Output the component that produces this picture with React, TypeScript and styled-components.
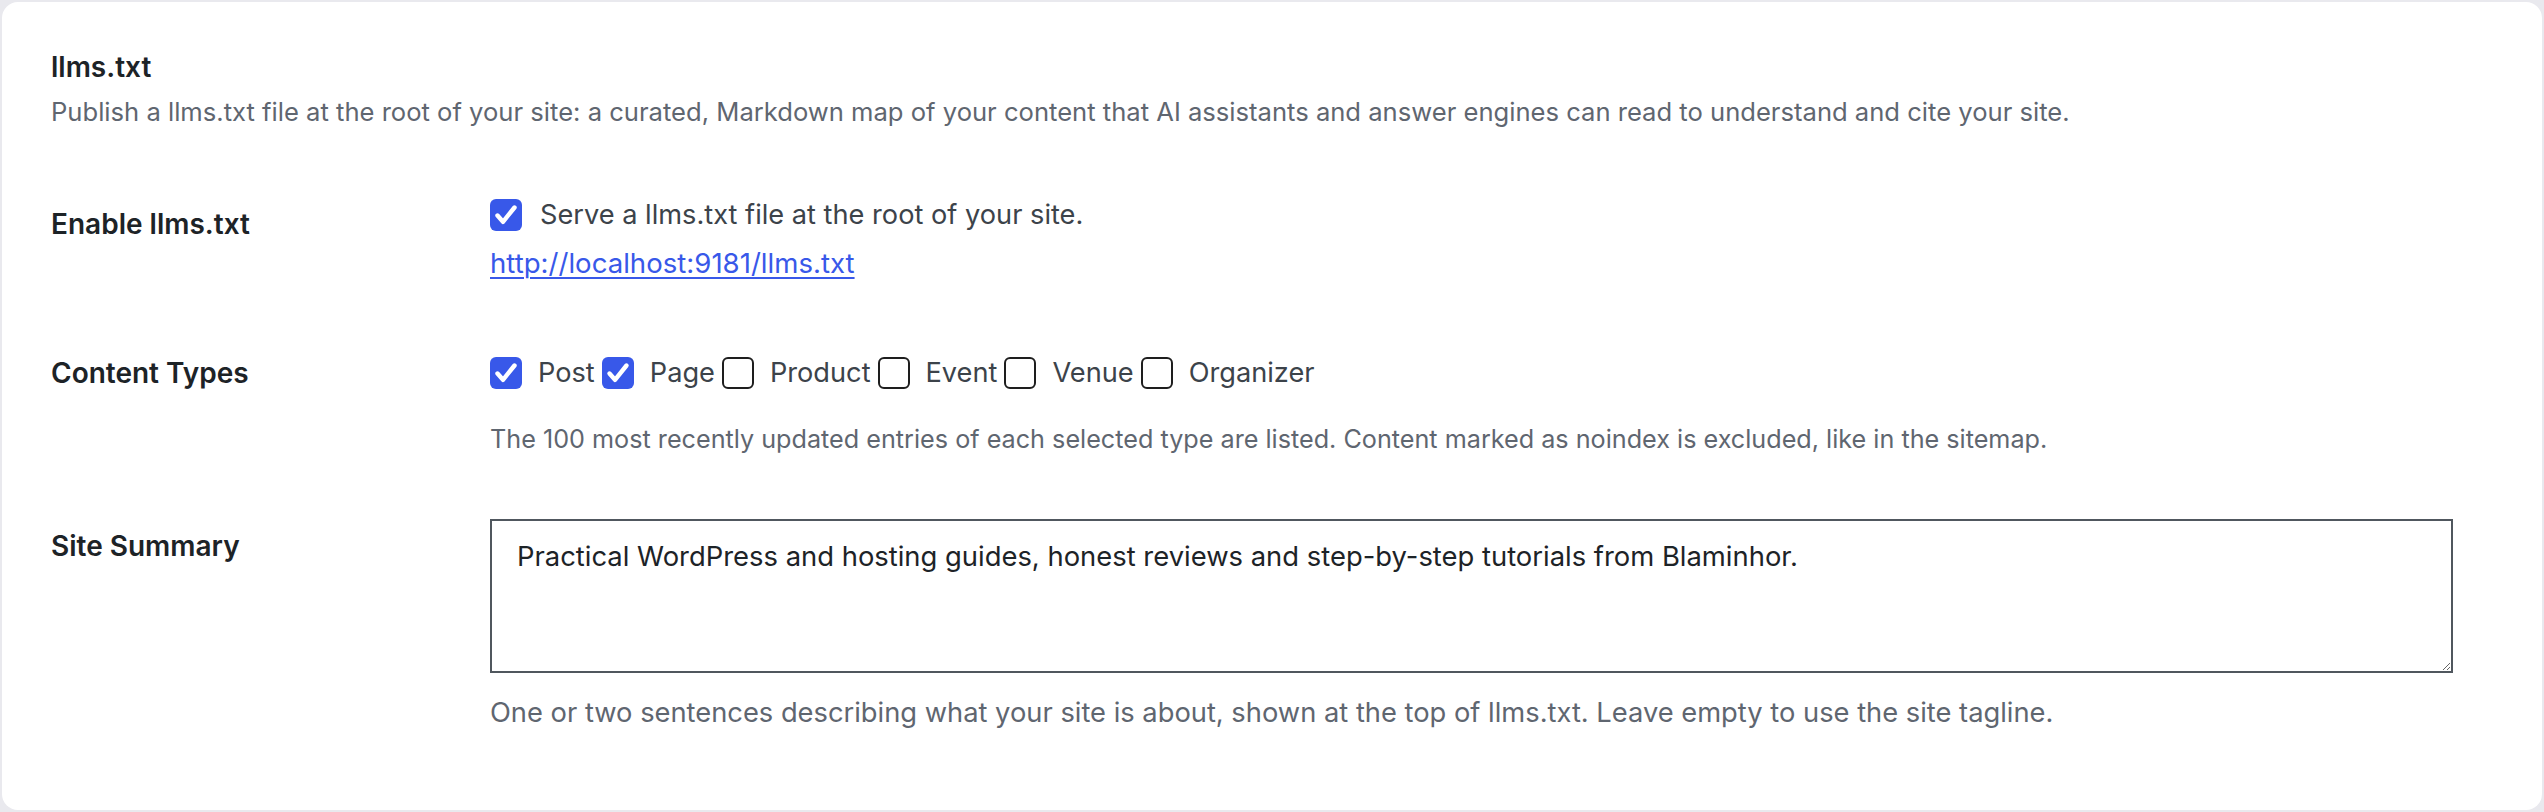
import styled, { createGlobalStyle } from 'styled-components'

const Global = createGlobalStyle`
  html, body {
    margin: 0;
    padding: 0;
    background: #e9e9ee;
    font-family: Inter, "Noto Sans", "Liberation Sans", sans-serif;
  }
  * { box-sizing: border-box; }
`

type Option = { label: string; checked: boolean }

const types: Option[] = [
  { label: 'Post', checked: true },
  { label: 'Page', checked: true },
  { label: 'Product', checked: false },
  { label: 'Event', checked: false },
  { label: 'Venue', checked: false },
  { label: 'Organizer', checked: false },
]

const Check = ({ checked }: { checked: boolean }) => (
  <Box $checked={checked}>
    {checked && (
      <svg width="32" height="32" viewBox="0 0 32 32">
        <path d="M7.5 16.5 L13 22.8 L24.5 8.5" fill="none" stroke="#fff" strokeWidth="4.4" strokeLinecap="round" strokeLinejoin="round" />
      </svg>
    )}
  </Box>
)

const App = () => {
  return (
    <Card>
      <Global />
      <Title>llms.txt</Title>
      <Intro>
        Publish a llms.txt file at the root of your site: a curated, Markdown map of your content that AI assistants and answer engines can read to understand and cite your site.
      </Intro>

      <Row $top={65}>
        <Label $offset={9}>Enable llms.txt</Label>
        <Field>
          <OptionLine>
            <Choice $gap={18}>
              <Check checked />
              <span>Serve a llms.txt file at the root of your site.</span>
            </Choice>
          </OptionLine>
          <Link href="#">http://localhost:9181/llms.txt</Link>
        </Field>
      </Row>

      <Row $top={70}>
        <Label $offset={0}>Content Types</Label>
        <Field>
          <OptionLine>
            {types.map((t) => (
              <Choice key={t.label} $gap={16}>
                <Check checked={t.checked} />
                <span>{t.label}</span>
              </Choice>
            ))}
          </OptionLine>
          <Help $top={28} $size={25.2}>
            The 100 most recently updated entries of each selected type are listed. Content marked as noindex is excluded, like in the sitemap.
          </Help>
        </Field>
      </Row>

      <Row $top={62}>
        <Label $offset={7}>Site Summary</Label>
        <Field>
          <Summary defaultValue="Practical WordPress and hosting guides, honest reviews and step-by-step tutorials from Blaminhor." />
          <Help $top={22} $size={27.3}>
            One or two sentences describing what your site is about, shown at the top of llms.txt. Leave empty to use the site tagline.
          </Help>
        </Field>
      </Row>
    </Card>
  )
}

export default App

const Card = styled.div`
  margin: 2px;
  height: 808px;
  background: #fff;
  border-radius: 16px;
  padding: 45px 49px 0 49px;
`

const Title = styled.h2`
  margin: 0;
  font-size: 28px;
  line-height: 40px;
  font-weight: 600;
  color: #1d2327;
`

const Intro = styled.p`
  margin: 7px 0 0;
  font-size: 25.6px;
  line-height: 36px;
  color: #5f6670;
`

const Row = styled.div<{ $top: number }>`
  display: grid;
  grid-template-columns: 439px 1fr;
  align-items: start;
  margin-top: ${(p) => p.$top}px;
`

const Label = styled.div<{ $offset: number }>`
  padding-top: ${(p) => p.$offset}px;
  font-size: 28px;
  line-height: 40px;
  font-weight: 600;
  color: #1d2327;
`

const Field = styled.div`
  display: flex;
  flex-direction: column;
  align-items: flex-start;
`

const OptionLine = styled.div`
  display: flex;
  align-items: center;
  height: 40px;
`

const Choice = styled.label<{ $gap: number }>`
  display: flex;
  align-items: center;
  gap: ${(p) => p.$gap}px;
  padding-right: 7px;
  font-size: 27.2px;
  line-height: 40px;
  color: #3c434a;
  cursor: pointer;
`

const Box = styled.span<{ $checked: boolean }>`
  display: inline-flex;
  width: 32px;
  height: 32px;
  flex: none;
  border-radius: 6px;
  background: ${(p) => (p.$checked ? '#3858e9' : '#fff')};
  border: ${(p) => (p.$checked ? 'none' : '2.5px solid #1e1e1e')};
`

const Link = styled.a`
  margin-top: 8px;
  font-size: 27.6px;
  line-height: 40px;
  color: #3858e9;
  text-decoration: underline;
  text-underline-offset: 4px;
  text-decoration-thickness: 2px;
`

const Help = styled.p<{ $top: number; $size: number }>`
  margin: ${(p) => p.$top}px 0 0;
  font-size: ${(p) => p.$size}px;
  line-height: 36px;
  color: #5f6670;
`

const Summary = styled.textarea`
  width: 1963px;
  height: 154px;
  border: 2px solid #50575e;
  border-radius: 0;
  padding: 15px 25px;
  font-family: Inter, "Noto Sans", "Liberation Sans", sans-serif;
  font-size: 27.4px;
  line-height: 40px;
  color: #1d2327;
  background: #fff;
  outline: none;
  resize: vertical;
`
